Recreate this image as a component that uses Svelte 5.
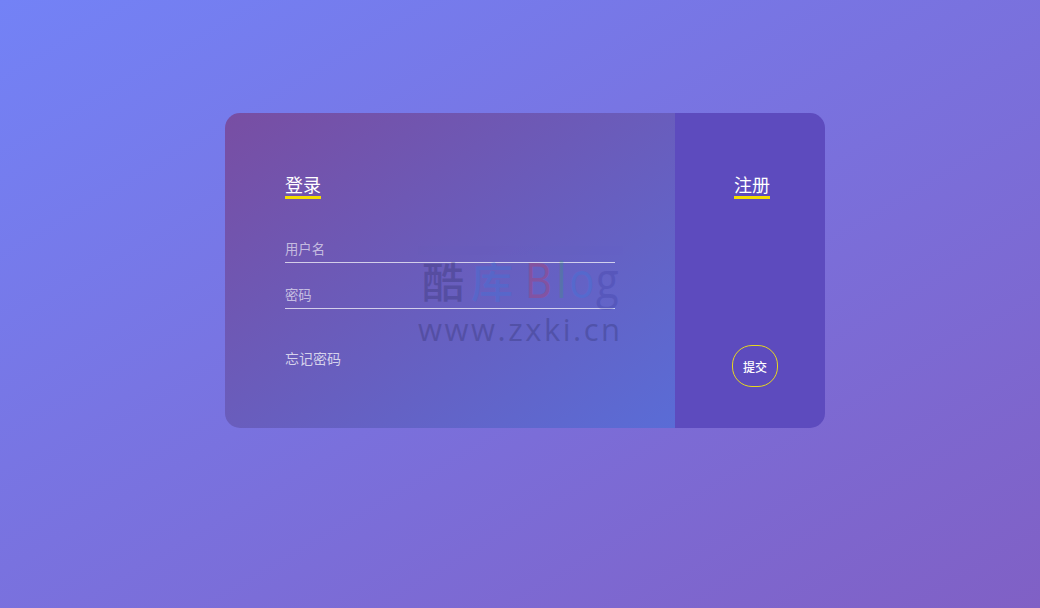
<script>
  let username = $state('');
  let password = $state('');
</script>

<main class="page">
  <section class="card">
    <form class="login" onsubmit={(e) => e.preventDefault()}>
      <h2 class="title">登录</h2>
      <label class="field">
        <input type="text" placeholder="用户名" bind:value={username} />
      </label>
      <label class="field">
        <input type="password" placeholder="密码" bind:value={password} />
      </label>
      <a class="forgot" href="#forgot">忘记密码</a>
    </form>
    <aside class="side">
      <h2 class="title">注册</h2>
      <button class="submit" type="button">提交</button>
    </aside>
    <div class="mark" aria-hidden="true">
      <div class="mark-top">
        <span class="ku">酷</span><span class="ku2">库</span><span class="blog"><span class="b">B</span><span class="l">l</span><span class="o">o</span><span class="g">g</span></span>
      </div>
      <div class="mark-url">www.zxki.cn</div>
    </div>
  </section>
</main>

<style>
  :global(body) {
    margin: 0;
    font-family: "Noto Sans CJK SC", "Liberation Sans", sans-serif;
  }
  .page {
    box-sizing: border-box;
    height: 608px;
    padding: 113px 0 0 225px;
    background: linear-gradient(to right bottom, #7382f6, #8060c5);
    overflow: hidden;
  }
  .card {
    position: relative;
    display: flex;
    width: 600px;
    height: 315px;
    border-radius: 15px;
    overflow: hidden;
  }
  .login {
    box-sizing: border-box;
    display: flex;
    flex-direction: column;
    align-items: flex-start;
    width: 450px;
    padding: 58px 60px 0;
    background: linear-gradient(to right bottom, #784ea3, #5a6cd6);
  }
  .side {
    box-sizing: border-box;
    display: flex;
    flex-direction: column;
    align-items: flex-start;
    width: 150px;
    padding: 58px 0 0 59px;
    background: #5d4bbe;
  }
  .title {
    margin: 0;
    height: 25px;
    font-size: 18px;
    font-weight: 400;
    line-height: 26px;
    color: #fff;
    border-bottom: 3px solid #f4de00;
  }
  .field {
    display: block;
    width: 330px;
    margin-bottom: 10px;
    border-bottom: 1px solid rgba(255, 255, 255, 0.7);
  }
  .login .title + .field {
    margin-top: 28px;
  }
  .field input {
    display: block;
    box-sizing: border-box;
    width: 100%;
    height: 35px;
    padding: 8px 0 0;
    border: 0;
    outline: 0;
    background: transparent;
    color: #fff;
    font: inherit;
    font-size: 13.33px;
    line-height: 20px;
  }
  .field input::placeholder {
    color: rgba(255, 255, 255, 0.62);
    opacity: 1;
  }
  .forgot {
    margin-top: 28px;
    font-size: 14px;
    line-height: 22px;
    color: rgba(255, 255, 255, 0.72);
    text-decoration: none;
  }
  .submit {
    box-sizing: border-box;
    width: 46px;
    height: 42px;
    margin: 146px 0 0 -2px;
    padding: 0;
    border: 1px solid #e6d81e;
    border-radius: 20px;
    background: transparent;
    color: #fff;
    font: inherit;
    font-size: 12px;
    font-weight: 500;
  }
  .mark {
    position: absolute;
    left: 193px;
    top: 137px;
    width: 210px;
    opacity: 0.24;
    pointer-events: none;
  }
  .mark-top {
    display: flex;
    align-items: baseline;
    height: 58px;
    font-size: 42px;
    line-height: 58px;
    white-space: nowrap;
  }
  .ku { color: #1c1c4c; margin-left: 4px; font-weight: 500; }
  .ku2 { color: #2a80e8; margin-left: 7px; font-weight: 500; }
  .blog {
    display: inline-block;
    margin-left: 12px;
    transform: scaleX(0.85);
    transform-origin: left center;
    font-family: "Open Sans", sans-serif;
    font-size: 49px;
    font-weight: 400;
  }
  .b { color: #e02a3c; }
  .l { color: #2fa860; margin-left: 5px; }
  .o { color: #2a80e8; margin-left: 3px; }
  .g { color: #33339a; margin-left: 2px; }
  .mark-url {
    margin-top: 3px;
    font-family: "Open Sans", sans-serif;
    font-size: 31px;
    line-height: 36px;
    color: #1c1c4c;
    letter-spacing: 2.5px;
    white-space: nowrap;
  }
</style>
